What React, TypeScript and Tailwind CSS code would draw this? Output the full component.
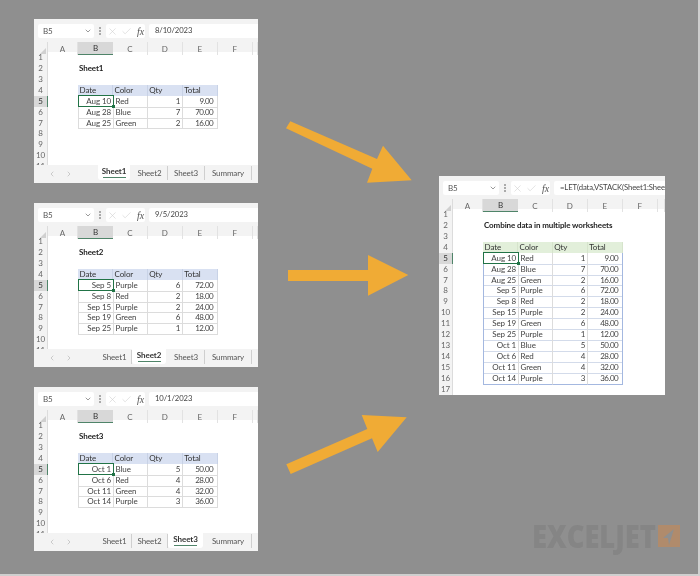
import { Check, ChevronDown, ChevronLeft, ChevronRight, X } from 'lucide-react'

type Row = [string, string, number, string]

const sheet1: Row[] = [
  ['Aug 10', 'Red', 1, '9.00'],
  ['Aug 28', 'Blue', 7, '70.00'],
  ['Aug 25', 'Green', 2, '16.00'],
]
const sheet2: Row[] = [
  ['Sep 5', 'Purple', 6, '72.00'],
  ['Sep 8', 'Red', 2, '18.00'],
  ['Sep 15', 'Purple', 2, '24.00'],
  ['Sep 19', 'Green', 6, '48.00'],
  ['Sep 25', 'Purple', 1, '12.00'],
]
const sheet3: Row[] = [
  ['Oct 1', 'Blue', 5, '50.00'],
  ['Oct 6', 'Red', 4, '28.00'],
  ['Oct 11', 'Green', 4, '32.00'],
  ['Oct 14', 'Purple', 3, '36.00'],
]

const colClass = 'grid grid-cols-[14px_30px_35px_34.7px_35px_35px_35px_1fr]'
const tabs = ['Sheet1', 'Sheet2', 'Sheet3', 'Summary']
const tabWidths = ['w-[34px]', 'w-[36px]', 'w-[37px]', 'w-[47px]']

function Toolbar({ formula }: { formula: string }) {
  return (
    <div className="flex h-[23px] shrink-0 items-start bg-[#f3f3f3] pt-[5px] pl-[4px]">
      <div className="flex h-[14px] w-[56px] items-center justify-between rounded-[2px] bg-white pr-[2px] pl-[5px] text-[#555]">
        <span>B5</span>
        <ChevronDown className="h-[8px] w-[8px] text-[#666]" />
      </div>
      <div className="mx-[5px] mt-[3px] flex w-[2px] flex-col gap-[1px]">
        <div className="h-[2px] w-[2px] bg-[#aaa]" />
        <div className="h-[2px] w-[2px] bg-[#aaa]" />
        <div className="h-[2px] w-[2px] bg-[#aaa]" />
      </div>
      <div className="flex h-[14px] w-[39px] items-center gap-[3px] rounded-[2px] bg-white pl-[1px] text-[#555]">
        <X className="h-[11px] w-[11px] text-[#cdcdcd]" strokeWidth={1.25} />
        <Check className="h-[11px] w-[11px] text-[#cdcdcd]" strokeWidth={1.25} />
        <span className="ml-[2px] font-['Liberation_Serif',serif] text-[10px] italic">fx</span>
      </div>
      <div className="ml-[4px] flex h-[14px] min-w-0 flex-1 items-center overflow-hidden rounded-l-[2px] bg-white pl-[6px] text-[7.7px] whitespace-nowrap text-[#444]">
        {formula}
      </div>
    </div>
  )
}

function Headers() {
  return (
    <div className={`${colClass} h-[10px] bg-[#f3f3f3] text-[#666]`}>
      <div className="relative border-r border-[#dcdcdc]">
        <div className="absolute right-[1px] bottom-[1px] h-0 w-0 border-b-[6px] border-l-[6px] border-b-[#d0d0d0] border-l-transparent" />
      </div>
      {['A', 'B', 'C', 'D', 'E', 'F', ''].map((c) => (
        <div
          key={c}
          className={
            c === 'B'
              ? 'flex items-center justify-center border-b-[1.5px] border-[#4f8469] bg-[#d8d8d8] text-[#333]'
              : 'flex items-center justify-center border-r border-[#e2e2e2]'
          }
        >
          {c}
        </div>
      ))}
    </div>
  )
}

function Grid({ title, rows, count, green }: { title: string; rows: Row[]; count: number; green?: boolean }) {
  const lastRow = rows.length + 4
  return (
    <div className="min-h-0 flex-1 overflow-hidden bg-white">
      <Headers />
      {Array.from({ length: count }, (_, i) => i + 1).map((n) => {
        const row = rows[n - 5]
        const last = n === lastRow
        const rowLine = green ? 'border-[#d3dbea]' : 'border-[#dcdcdc]'
        return (
          <div key={n} className={`${colClass} h-[10.93px] leading-[10.93px]`}>
            <div className={n === 5 ? 'border-r-[1.5px] border-[#4f8469] bg-[#d8d8d8] text-center text-[#333]' : 'border-r border-[#dcdcdc] bg-[#f3f3f3] text-center text-[#666]'}>
              {n}
            </div>
            <div />
            {n === 2 && <div className="col-span-4 pl-[1px] font-bold whitespace-nowrap text-[#222]">{title}</div>}
            {n === 4 &&
              ['Date', 'Color', 'Qty', 'Total'].map((h) => (
                <div key={h} className={green ? 'border-r border-[#d6e4cc] bg-[#e2efda] pl-[1.5px] text-[#333]' : 'border-r border-[#c8d2e6] bg-[#d9e1f2] pl-[1.5px] text-[#333]'}>
                  {h}
                </div>
              ))}
            {row && (
              <>
                <div className={`relative border-b border-l pr-[2px] text-right text-[#444] ${n === 5 ? 'border-transparent' : last && green ? 'border-[#a4b8e0]' : green ? 'border-l-[#a4b8e0] ' + rowLine : 'border-[#dcdcdc]'}`}>
                  {row[0]}
                  {n === 5 && (
                    <div className="absolute -top-[0.5px] -right-[1px] -bottom-[0.5px] -left-[1px] border-[1.5px] border-[#217346]">
                      <div className="absolute -right-[2px] -bottom-[2px] h-[3px] w-[3px] bg-[#217346]" />
                    </div>
                  )}
                </div>
                <div className={`border-r border-b border-l border-l-[#dcdcdc] pl-[1.5px] text-[#444] ${last && green ? 'border-b-[#a4b8e0] border-r-[#dcdcdc]' : rowLine + ' border-r-[#dcdcdc]'}`}>{row[1]}</div>
                <div className={`border-r border-b pr-[1.5px] text-right text-[#444] ${last && green ? 'border-b-[#a4b8e0] border-r-[#dcdcdc]' : rowLine + ' border-r-[#dcdcdc]'}`}>{row[2]}</div>
                <div className={`border-r border-b pr-[3.5px] text-right tracking-[-0.5px] text-[#444] ${green ? 'border-[#a4b8e0] ' + (last ? '' : 'border-b-[#d3dbea]') : 'border-[#dcdcdc]'}`}>{row[3]}</div>
              </>
            )}
          </div>
        )
      })}
    </div>
  )
}

function TabBar({ active }: { active: number }) {
  return (
    <div className="flex h-[18px] shrink-0 items-start bg-[#f3f3f3] text-[#555]">
      <div className="flex w-[64px] items-center gap-[9px] pt-[5px] pl-[14px] text-[#b5b5b5]">
        <ChevronLeft className="h-[8px] w-[8px]" />
        <ChevronRight className="h-[8px] w-[8px]" />
      </div>
      {tabs.map((t, i) => (
        <div key={t} className={`${tabWidths[i]} flex h-[14px] items-center justify-center ${i === active ? 'border-0' : 'mt-[1px] border-r border-[#cfcfcf]'}`}>
          {i === active ? (
            <div className="mr-[2px] flex h-[15px] w-full flex-col items-center rounded-b-[3px] bg-white pt-[1px] font-bold text-[#333]">
              <span className="leading-[10px]">{t}</span>
              <div className="mt-[1px] h-[1px] w-[23px] bg-[#4f8469]" />
            </div>
          ) : (
            t
          )}
        </div>
      ))}
    </div>
  )
}

function SheetWindow({ title, formula, rows, active }: { title: string; formula: string; rows: Row[]; active: number }) {
  return (
    <div className="flex h-[164px] w-[224px] flex-col overflow-hidden bg-white blur-[0.3px]">
      <Toolbar formula={formula} />
      <Grid title={title} rows={rows} count={11} />
      <TabBar active={active} />
    </div>
  )
}

export default function App() {
  return (
    <div className="relative flex h-[576px] w-[700px] overflow-hidden border-r-2 border-b-2 border-[#cfcfcf] bg-[#8f8f8f] pt-[19px] pl-[34px] font-['Lato','Noto_Sans',sans-serif] text-[8px] tracking-[-0.1px]">
      <div className="flex flex-col gap-[20px]">
        <SheetWindow title="Sheet1" formula="8/10/2023" rows={sheet1} active={0} />
        <SheetWindow title="Sheet2" formula="9/5/2023" rows={sheet2} active={1} />
        <SheetWindow title="Sheet3" formula="10/1/2023" rows={sheet3} active={2} />
      </div>

      <div className="mt-[157px] ml-[181px] flex h-[219px] w-[226px] flex-col overflow-hidden bg-white blur-[0.3px]">
        <Toolbar formula="=LET(data,VSTACK(Sheet1:Sheet3!B5:E16)" />
        <Grid title="Combine data in multiple worksheets" rows={[...sheet1, ...sheet2, ...sheet3]} count={17} green />
      </div>

      {/* arrows */}
      <svg className="absolute top-0 left-0" width="700" height="576" fill="#f0ab35">
        <polygon points="286,128.3 290.3,121.3 377,159 383,145.7 411.7,180.3 367,182.7 372.3,168.7" />
        <polygon points="288,270 368,270 368,255 408.3,275 368,295.7 368,281 288,281" />
        <polygon points="286.3,464.3 367.3,429 361.7,415 406.7,417.3 377.7,452 372,438.3 290.7,474" />
      </svg>

      {/* watermark */}
      <div className="absolute top-[525px] left-[532px] flex items-start">
        <span className="w-[124px] origin-left scale-x-[0.88] font-['Open_Sans',sans-serif] text-[31px] leading-[22px] font-extrabold tracking-normal whitespace-nowrap text-[#858585]">
          EXCELJET
        </span>
        <svg className="ml-[2px]" width="22" height="22" viewBox="0 0 22 22">
          <rect width="22" height="22" fill="#b08b6c" />
          <polygon points="16,4 5,13 10,13 11,20" fill="#8f8f8f" />
        </svg>
      </div>
    </div>
  )
}
